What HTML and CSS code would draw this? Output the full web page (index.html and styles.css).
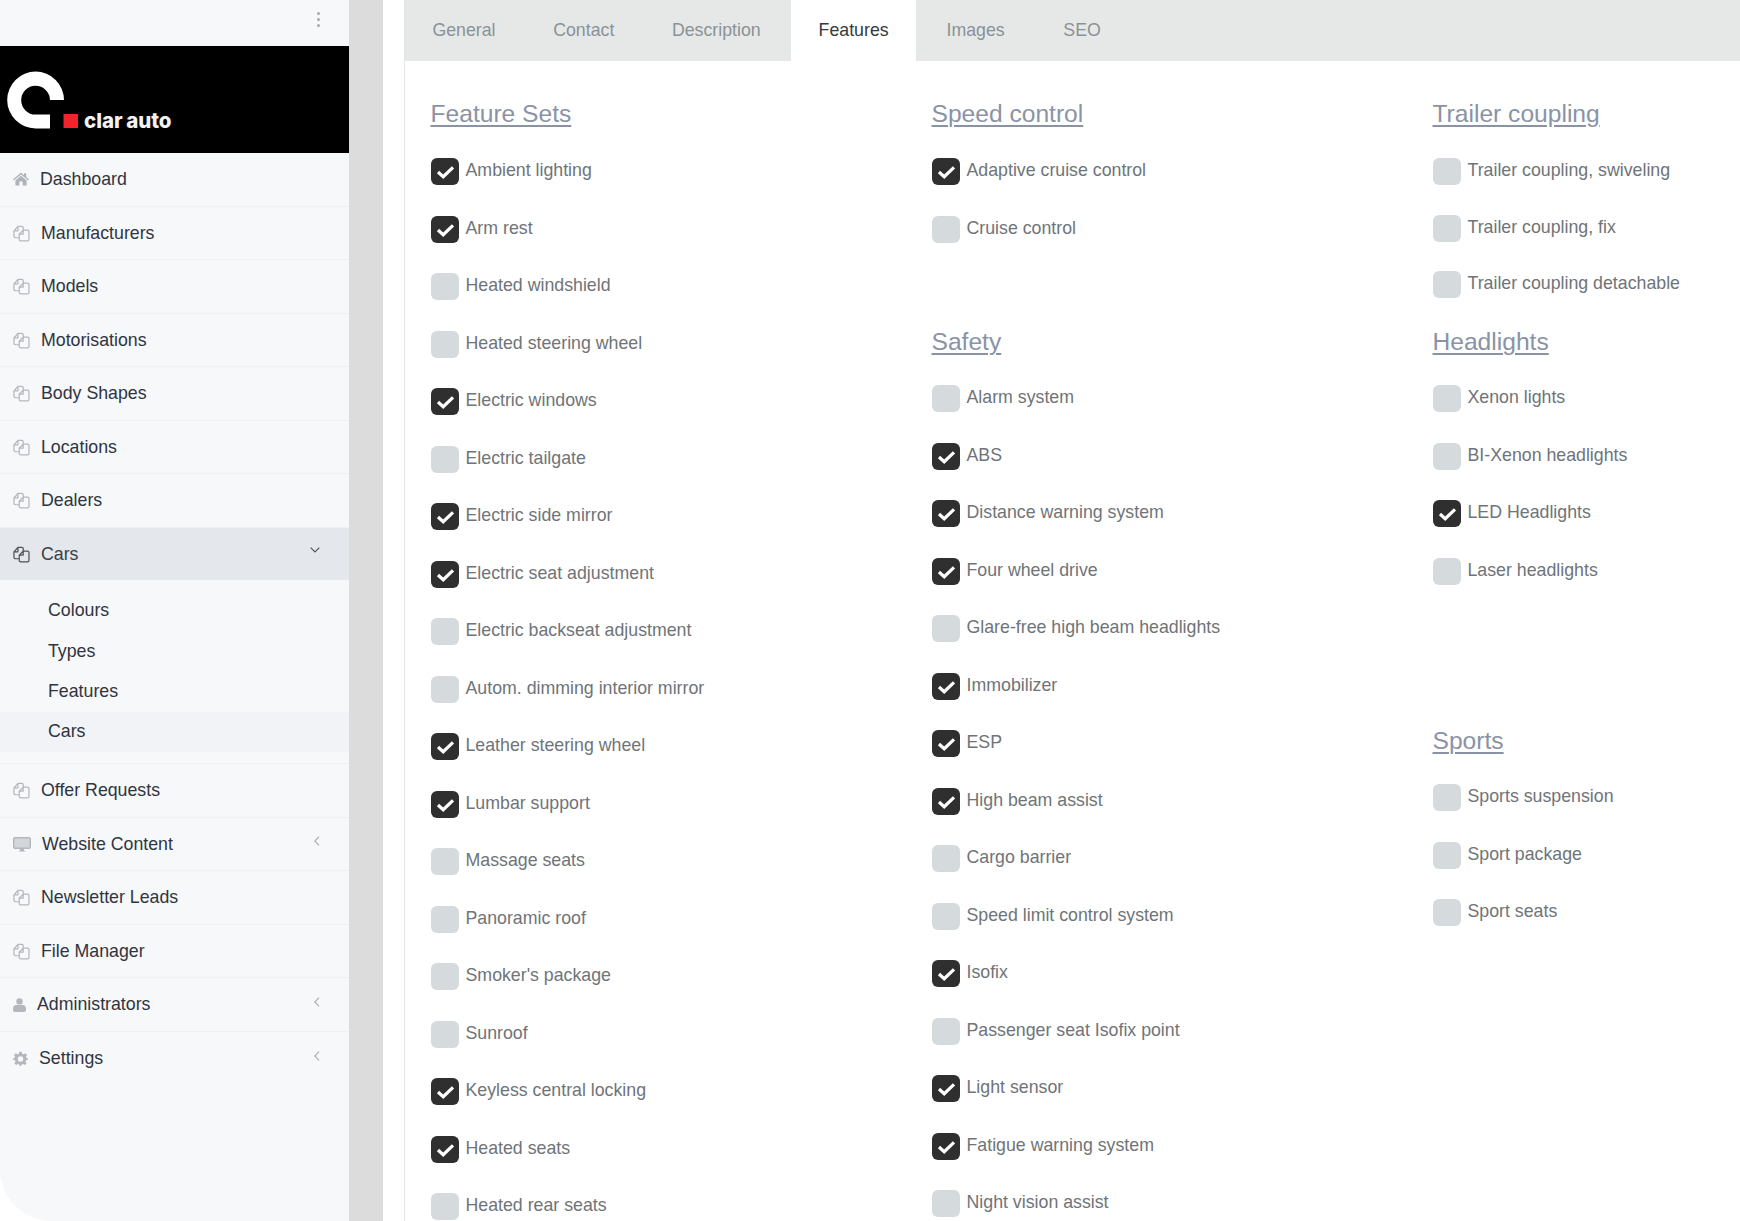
FILE: index.html
```html
<!DOCTYPE html>
<html lang="en">
<head>
<meta charset="utf-8">
<title>Features</title>
<link rel="stylesheet" href="styles.css">
</head>
<body>
<svg class="defs" aria-hidden="true">
  <symbol id="i-files" viewBox="0 0 18 18">
    <path d="M7 13.5H2.6A1.6 1.6 0 0 1 1 11.9V6.2L5.2 1.5H9.4A1.4 1.4 0 0 1 10.8 2.9V5.5M5.2 1.5V6.2H1M6.6 9.6V15.4A1.5 1.5 0 0 0 8.1 16.9H15.4A1.5 1.5 0 0 0 16.9 15.4V7A1.5 1.5 0 0 0 15.4 5.5H10.8L6.6 9.6H10.8V5.5" fill="none" stroke="currentColor" stroke-width="1.3" stroke-linejoin="round"/>
  </symbol>
  <symbol id="i-check" viewBox="0 0 28 27">
    <path d="M7 14L12.2 18.7L22 9.4" fill="none" stroke="#fff" stroke-width="3.2"/>
  </symbol>
</svg>
<div class="app">
  <aside class="sidebar">
    <div class="topbar"><span class="dots"><i></i><i></i><i></i></span></div>
    <div class="brand">
      <svg class="logo" width="80" height="107" viewBox="0 0 80 107">
        <path d="M64 54A28.4 28.4 0 1 0 35.6 82.4H50V68.6H35.6A14.4 14.4 0 1 1 50 54Z" fill="#fff"/>
        <rect x="63.5" y="68" width="14.5" height="14" fill="#f4222a"/>
      </svg>
      <span class="brand-name">clar auto</span>
    </div>
    <nav class="nav">
      <a class="nav-item first-item">
        <svg class="ico home" viewBox="0 0 16 14"><path d="M8 0.6L0 7.4L0.8 8.4L8 2.4L15.2 8.4L16 7.4L13.2 5V1.2H11V3.2ZM2.4 8.4V13.4H6.4V9.4H9.6V13.4H13.6V8.4L8 3.7Z" fill="currentColor"/></svg>
        <span class="label">Dashboard</span>
      </a>
      <a class="nav-item"><svg class="ico"><use href="#i-files"/></svg><span class="label">Manufacturers</span></a>
      <a class="nav-item"><svg class="ico"><use href="#i-files"/></svg><span class="label">Models</span></a>
      <a class="nav-item"><svg class="ico"><use href="#i-files"/></svg><span class="label">Motorisations</span></a>
      <a class="nav-item"><svg class="ico"><use href="#i-files"/></svg><span class="label">Body Shapes</span></a>
      <a class="nav-item"><svg class="ico"><use href="#i-files"/></svg><span class="label">Locations</span></a>
      <a class="nav-item"><svg class="ico"><use href="#i-files"/></svg><span class="label">Dealers</span></a>
      <a class="nav-item active"><svg class="ico"><use href="#i-files"/></svg><span class="label">Cars</span>
        <svg class="chev down" viewBox="0 0 10 6"><path d="M0.7 0.7L5 5L9.3 0.7" fill="none" stroke="currentColor" stroke-width="1.1"/></svg>
      </a>
      <div class="subnav">
        <a class="sub-item">Colours</a>
        <a class="sub-item">Types</a>
        <a class="sub-item">Features</a>
        <a class="sub-item current">Cars</a>
      </div>
      <a class="nav-item"><svg class="ico"><use href="#i-files"/></svg><span class="label">Offer Requests</span></a>
      <a class="nav-item">
        <svg class="ico monitor" viewBox="0 0 18 15"><rect x="0.7" y="0.7" width="16.6" height="10.6" rx="1.4" fill="#d3d6da" stroke="currentColor" stroke-width="1.4"/><path d="M7 12H11V13.3L12.6 14.6H5.4L7 13.3Z" fill="currentColor"/></svg>
        <span class="label">Website Content</span>
        <svg class="chev left" viewBox="0 0 6 10"><path d="M5 0.7L0.8 5L5 9.3" fill="none" stroke="currentColor" stroke-width="1.1"/></svg>
      </a>
      <a class="nav-item"><svg class="ico"><use href="#i-files"/></svg><span class="label">Newsletter Leads</span></a>
      <a class="nav-item"><svg class="ico"><use href="#i-files"/></svg><span class="label">File Manager</span></a>
      <a class="nav-item">
        <svg class="ico user" viewBox="0 0 13 14"><circle cx="6.5" cy="3.4" r="3.2" fill="currentColor"/><path d="M0 12V10.2C0 8.4 1.4 7 3.2 7H9.8C11.6 7 13 8.4 13 10.2V12C13 13.2 12.2 14 11 14H2C0.8 14 0 13.2 0 12Z" fill="currentColor"/></svg>
        <span class="label">Administrators</span>
        <svg class="chev left" viewBox="0 0 6 10"><path d="M5 0.7L0.8 5L5 9.3" fill="none" stroke="currentColor" stroke-width="1.1"/></svg>
      </a>
      <a class="nav-item">
        <svg class="ico cog" viewBox="0 0 24 24"><path fill-rule="evenodd" d="M10 1H14L14.7 4.2L16.9 5.1L19.7 3.4L22.5 6.2L20.8 9L21.7 11.2L24 12V14L20.9 14.8L20 17L21.7 19.8L19 22.5L16.2 20.8L14 21.7L13.2 24H10.8L10 21.7L7.8 20.8L5 22.5L2.3 19.8L4 17L3.1 14.8L0 14V12L2.3 11.2L3.2 9L1.5 6.2L4.3 3.4L7.1 5.1L9.3 4.2ZM12 8.3A4.4 4.4 0 1 0 12 17.1A4.4 4.4 0 1 0 12 8.3Z" fill="currentColor"/></svg>
        <span class="label">Settings</span>
        <svg class="chev left" viewBox="0 0 6 10"><path d="M5 0.7L0.8 5L5 9.3" fill="none" stroke="currentColor" stroke-width="1.1"/></svg>
      </a>
    </nav>
  </aside>
  <div class="gutter"></div>
  <main class="panel">
    <div class="tabs">
      <a class="tab">General</a>
      <a class="tab">Contact</a>
      <a class="tab before-selected">Description</a>
      <a class="tab selected">Features</a>
      <a class="tab after-selected">Images</a>
      <a class="tab last">SEO</a>
    </div>
    <div class="columns">
      <section class="column">
        <div class="group lead">
          <h2>Feature Sets</h2>
          <label class="opt"><span class="box on"><svg><use href="#i-check"/></svg></span>Ambient lighting</label>
          <label class="opt"><span class="box on"><svg><use href="#i-check"/></svg></span>Arm rest</label>
          <label class="opt"><span class="box"></span>Heated windshield</label>
          <label class="opt"><span class="box"></span>Heated steering wheel</label>
          <label class="opt"><span class="box on"><svg><use href="#i-check"/></svg></span>Electric windows</label>
          <label class="opt"><span class="box"></span>Electric tailgate</label>
          <label class="opt"><span class="box on"><svg><use href="#i-check"/></svg></span>Electric side mirror</label>
          <label class="opt"><span class="box on"><svg><use href="#i-check"/></svg></span>Electric seat adjustment</label>
          <label class="opt"><span class="box"></span>Electric backseat adjustment</label>
          <label class="opt"><span class="box"></span>Autom. dimming interior mirror</label>
          <label class="opt"><span class="box on"><svg><use href="#i-check"/></svg></span>Leather steering wheel</label>
          <label class="opt"><span class="box on"><svg><use href="#i-check"/></svg></span>Lumbar support</label>
          <label class="opt"><span class="box"></span>Massage seats</label>
          <label class="opt"><span class="box"></span>Panoramic roof</label>
          <label class="opt"><span class="box"></span>Smoker's package</label>
          <label class="opt"><span class="box"></span>Sunroof</label>
          <label class="opt"><span class="box on"><svg><use href="#i-check"/></svg></span>Keyless central locking</label>
          <label class="opt"><span class="box on"><svg><use href="#i-check"/></svg></span>Heated seats</label>
          <label class="opt"><span class="box"></span>Heated rear seats</label>
        </div>
      </section>
      <section class="column">
        <div class="group lead short">
          <h2>Speed control</h2>
          <label class="opt"><span class="box on"><svg><use href="#i-check"/></svg></span>Adaptive cruise control</label>
          <label class="opt"><span class="box"></span>Cruise control</label>
        </div>
        <div class="group">
          <h2>Safety</h2>
          <label class="opt"><span class="box"></span>Alarm system</label>
          <label class="opt"><span class="box on"><svg><use href="#i-check"/></svg></span>ABS</label>
          <label class="opt"><span class="box on"><svg><use href="#i-check"/></svg></span>Distance warning system</label>
          <label class="opt"><span class="box on"><svg><use href="#i-check"/></svg></span>Four wheel drive</label>
          <label class="opt"><span class="box"></span>Glare-free high beam headlights</label>
          <label class="opt"><span class="box on"><svg><use href="#i-check"/></svg></span>Immobilizer</label>
          <label class="opt"><span class="box on"><svg><use href="#i-check"/></svg></span>ESP</label>
          <label class="opt"><span class="box on"><svg><use href="#i-check"/></svg></span>High beam assist</label>
          <label class="opt"><span class="box"></span>Cargo barrier</label>
          <label class="opt"><span class="box"></span>Speed limit control system</label>
          <label class="opt"><span class="box on"><svg><use href="#i-check"/></svg></span>Isofix</label>
          <label class="opt"><span class="box"></span>Passenger seat Isofix point</label>
          <label class="opt"><span class="box on"><svg><use href="#i-check"/></svg></span>Light sensor</label>
          <label class="opt"><span class="box on"><svg><use href="#i-check"/></svg></span>Fatigue warning system</label>
          <label class="opt"><span class="box"></span>Night vision assist</label>
        </div>
      </section>
      <section class="column">
        <div class="group lead short">
          <h2>Trailer coupling</h2>
          <label class="opt"><span class="box"></span>Trailer coupling, swiveling</label>
          <label class="opt"><span class="box"></span>Trailer coupling, fix</label>
          <label class="opt"><span class="box"></span>Trailer coupling detachable</label>
        </div>
        <div class="group headlights">
          <h2>Headlights</h2>
          <label class="opt"><span class="box"></span>Xenon lights</label>
          <label class="opt"><span class="box"></span>BI-Xenon headlights</label>
          <label class="opt"><span class="box on"><svg><use href="#i-check"/></svg></span>LED Headlights</label>
          <label class="opt"><span class="box"></span>Laser headlights</label>
        </div>
        <div class="group">
          <h2>Sports</h2>
          <label class="opt"><span class="box"></span>Sports suspension</label>
          <label class="opt"><span class="box"></span>Sport package</label>
          <label class="opt"><span class="box"></span>Sport seats</label>
        </div>
      </section>
    </div>
  </main>
</div>
</body>
</html>
```

FILE: styles.css
```css
* { box-sizing: border-box; }
html, body { margin: 0; height: 1221px; overflow: hidden; background: #fff; }
body { font-family: "Liberation Sans", Arial, sans-serif; color: #343a40; }
.defs { position: absolute; width: 0; height: 0; }

.app { display: flex; height: 1221px; }

.sidebar {
  flex: 0 0 349px;
  height: 1221px;
  background: #f7f8fa;
  border-bottom-left-radius: 52px;
}
.topbar { height: 46px; display: flex; justify-content: flex-end; align-items: center; padding: 0 29px 0 0; }
.dots { display: flex; flex-direction: column; gap: 3px; margin-top: -7px; }
.dots i { display: block; width: 3px; height: 3px; border-radius: 50%; background: #a6abb3; }

.brand { height: 107px; background: #000; display: flex; align-items: flex-end; }
.logo { flex: none; }
.brand-name {
  font-family: Inter, "Liberation Sans", sans-serif;
  font-weight: 800;
  font-size: 20.5px;
  line-height: 1;
  letter-spacing: 0;
  word-spacing: -1px;
  color: #f2f2f2;
  margin: 0 0 22px 4px;
}

.nav { display: flex; flex-direction: column; }
.nav-item {
  height: 53.5px;
  padding: 1px 29px 0 13px;
  display: flex;
  align-items: center;
  font-size: 17.76px;
  color: #2f3540;
  border-bottom: 1.5px solid #eef0f3;
}
.nav-item.first-item { padding-top: 0; }
.nav-item:last-child { border-bottom: 0; }
.ico { flex: none; width: 17px; height: 17px; color: #b4b8be; display: block; }
.ico.home { width: 16px; height: 14px; color: #b0b4ba; }
.ico.monitor { width: 18px; height: 15px; }
.ico.user { width: 13px; height: 14px; }
.ico.cog { width: 15px; height: 15px; }
.label { margin-left: 11px; }
.chev { flex: none; margin-left: auto; color: #a9adb4; }
.chev.left { width: 6px; height: 10px; margin-top: -6px; }
.chev.down { width: 10px; height: 6px; margin-top: -8px; color: #4a505a; }

.nav-item.active { background: #e4e7eb; height: 52px; border-bottom: 0; color: #3a404a; }
.nav-item.active .ico { color: #4d525a; }

.subnav { display: flex; flex-direction: column; padding: 11px 0 11px; border-bottom: 1.5px solid #eef0f3; }
.sub-item { height: 40.4px; display: flex; align-items: center; padding-left: 48px; font-size: 17.76px; color: #2f3540; }
.sub-item.current { background: #f2f3f6; }

.gutter { flex: 0 0 34px; background: #dcdcdc; }

.panel { flex: 1; min-width: 0; margin-left: 21px; border-left: 1.5px solid #e3e5e6; height: 1221px; overflow: hidden; }

.tabs { display: flex; height: 61px; background: #e6e8e8; padding-left: 0; }
.tab { display: flex; align-items: center; padding: 0 28.8px; font-size: 17.76px; color: #8a9296; margin-top: -1px; }
.tab:first-child { padding-left: 27.4px; }
.tab.before-selected { margin-right: 1.6px; }
.tab.selected { background: #fff; color: #343a40; padding: 0 27.5px; margin-top: 0; }
.tab.after-selected { margin-left: 1.6px; }
.tab.last { margin-left: 1px; }

.columns { display: grid; grid-template-columns: repeat(3, 501px); padding: 37px 0 0 25.5px; }
.column { display: flex; flex-direction: column; }
.group { display: flex; flex-direction: column; }
.group.short { height: 228px; }
.group.headlights { height: 399px; }

h2 {
  margin: 0 0 25px;
  font-size: 24.6px;
  line-height: 32px;
  font-weight: 400;
  color: #8a93a5;
  text-decoration: underline;
  text-decoration-thickness: 2px;
  text-underline-offset: 3px;
}
.group.lead h2 { margin-bottom: 26px; }
.opt { display: flex; align-items: flex-start; height: 57.5px; padding-top: 4px; font-size: 17.76px; line-height: 20px; color: #6f7478; gap: 7px; }
.box { flex: none; width: 28px; height: 27px; border-radius: 6px; background: #d5dadd; margin-top: -2px; }
.box.on { background: #2f2f2f; }
.box svg { width: 100%; height: 100%; display: block; }
```
